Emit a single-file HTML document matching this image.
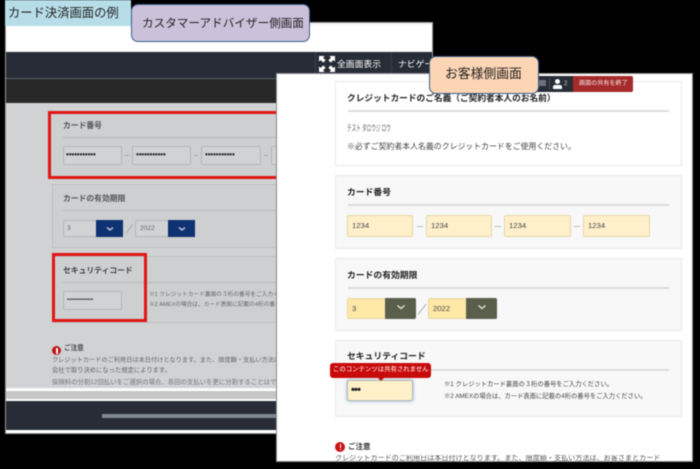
<!DOCTYPE html>
<html lang="ja"><head><meta charset="utf-8"><style>
html,body{margin:0;padding:0;background:#000}
body{width:700px;height:469px;overflow:hidden;position:relative}
#s{position:absolute;left:0;top:0;width:700px;height:469px;overflow:hidden;font-family:"Liberation Sans","Noto Sans CJK JP",sans-serif;filter:blur(.45px)}
#s div{position:absolute;box-sizing:border-box}
.t{white-space:nowrap;line-height:1}
.i{border:1px solid #b4b6b8;border-radius:2px;background:#d0d2d4;color:#333}
.y{border:1px solid #e6d6a8;border-radius:2px;background:#fff0ca;color:#444;font-size:7.7px;padding-left:4px;line-height:20px}
.p{background:#f8f8f8;border:1px solid #e8e8e8}
.h{font-weight:bold;color:#222;font-size:8.8px}
.d{background:#aaa;height:1px;width:4px}
</style></head><body><div id="s">
<!-- back window -->
<div style="left:5px;top:22px;width:428px;height:412px;background:#f4f4f4;border:1px solid #999"></div>
<div style="left:6px;top:25px;width:426px;height:26px;background:#fff"></div>
<div style="left:6px;top:52px;width:426px;height:26px;background:#272c36"></div>
<div style="left:6px;top:78px;width:426px;height:1px;background:#5a606a"></div>
<div style="left:6px;top:79px;width:426px;height:24px;background:#282828"></div>
<div style="left:6px;top:103px;width:272px;height:285px;background:#d0d2d4"></div>
<div style="left:315px;top:52px;width:1px;height:26px;background:#3c424c"></div>
<div style="left:391px;top:52px;width:1px;height:26px;background:#3c424c"></div>
<svg style="position:absolute;left:319px;top:56px" width="16" height="16" viewBox="0 0 17 17"><path fill="#fff" d="M0 0h6L4.300 1.800 7 4.500 4.500 7 1.800 4.300 0 6zM17 0v6l-1.800-1.700L12.500 7 10 4.500l2.700-2.700L11 0zM0 17v-6l1.800 1.700L4.500 10 7 12.500l-2.700 2.700L6 17zM17 17h-6l1.700-1.800L10 12.500l2.500-2.500 2.700 2.700L17 11z"/></svg>
<div class="t" style="left:337px;top:59.500px;font-size:8.800px;color:#fff">全画面表示</div>
<div class="t" style="left:398px;top:59.500px;font-size:8.800px;color:#fff">ナビゲーション</div>

<!-- back panel 1 -->
<div style="left:50px;top:113px;width:230px;height:65px;background:#cdcfd1"></div>
<div class="t h" style="left:63px;top:121.500px;color:#555;font-size:7.800px">カード番号</div>
<div style="left:63px;top:137px;width:215px;height:1px;background:#b5b7b9"></div>
<div class="i" style="left:63px;top:146px;width:59px;height:19px"></div>
<div class="i" style="left:132px;top:146px;width:59px;height:19px"></div>
<div class="i" style="left:201px;top:146px;width:60px;height:19px"></div>
<div class="i" style="left:271px;top:146px;width:20px;height:19px"></div>
<div class="t" style="left:66px;top:151px;font-size:8px;letter-spacing:-.1px;color:#222;font-weight:bold">•••••••••••</div>
<div class="t" style="left:136px;top:151px;font-size:8px;letter-spacing:-.1px;color:#222;font-weight:bold">•••••••••••</div>
<div class="t" style="left:205px;top:151px;font-size:8px;letter-spacing:-.1px;color:#222;font-weight:bold">•••••••••••</div>
<div class="d" style="left:125px;top:155px"></div><div class="d" style="left:194px;top:155px"></div><div class="d" style="left:264px;top:155px"></div>
<div style="left:48px;top:111px;width:232px;height:68px;border:3px solid #e01515;border-right:none"></div>

<!-- back panel 2 -->
<div style="left:52px;top:184px;width:230px;height:64px;background:#cdcfd1;border:1px solid #bcbec0"></div>
<div class="t h" style="left:63px;top:195px;color:#555;font-size:7.800px">カードの有効期限</div>
<div style="left:63px;top:210px;width:215px;height:1px;background:#b5b7b9"></div>
<div class="i" style="left:63px;top:220px;width:60px;height:17px;font-size:6.600px;padding-left:3px;line-height:15px;color:#666">3</div>
<div style="left:96px;top:220px;width:27px;height:17px;background:#0f3272"></div>
<svg style="position:absolute;left:106px;top:226px" width="8" height="6"><path d="M1 1.500l3 2.500 3-2.500" fill="none" stroke="#cfd6e6" stroke-width="1.300"/></svg>
<svg style="position:absolute;left:125px;top:222px" width="9" height="13"><path d="M1 11.500L8 2" stroke="#aaa" fill="none"/></svg>
<div class="i" style="left:135px;top:220px;width:60px;height:17px;font-size:6.600px;padding-left:4px;line-height:15px;color:#666">2022</div>
<div style="left:168px;top:220px;width:27px;height:17px;background:#0f3272"></div>
<svg style="position:absolute;left:178px;top:226px" width="8" height="6"><path d="M1 1.500l3 2.500 3-2.500" fill="none" stroke="#cfd6e6" stroke-width="1.300"/></svg>

<!-- back panel 3 -->
<div style="left:52px;top:256px;width:230px;height:67px;background:#cdcfd1;border:1px solid #bcbec0"></div>
<div class="t h" style="left:63px;top:267px;color:#444;font-size:7.800px">セキュリティコード</div>
<div style="left:63px;top:282px;width:215px;height:1px;background:#b5b7b9"></div>
<div class="i" style="left:63px;top:291px;width:59px;height:19px"></div>
<div class="t" style="left:67px;top:298px;font-size:5px;color:#333;font-weight:bold">•••••••••••••••</div>
<div class="t" style="left:149px;top:293px;font-size:5.700px;color:#666">※1 クレジットカード裏面の３桁の番号をご入力ください。</div>
<div class="t" style="left:149px;top:303px;font-size:5.700px;color:#666">※2 AMEXの場合は、カード表面に記載の4桁の番号をご入力ください。</div>
<div style="left:52px;top:253px;width:95px;height:69px;border:3px solid #e01515"></div>

<div style="left:52px;top:346px;width:9px;height:9px;border-radius:50%;background:#c01616"></div>
<div style="left:56px;top:348px;width:1.500px;height:3.500px;background:#fff"></div>
<div style="left:56px;top:352px;width:1.500px;height:1.500px;background:#fff"></div>
<div class="t" style="left:64px;top:346px;font-size:6.600px;color:#444;font-weight:bold">ご注意</div>
<div class="t" style="left:52px;top:358px;font-size:6.200px;color:#666">クレジットカードのご利用日は本日付けとなります。また、限度額・支払い方法は、お客さまとカード</div>
<div class="t" style="left:52px;top:368px;font-size:6.300px;color:#666">会社で取り決めになった規定によります。</div>
<div class="t" style="left:52px;top:380px;font-size:6.400px;color:#777">保険料の分割12回払いをご選択の場合、各回の支払いを更に分割することはできません。</div>

<div style="left:6px;top:389px;width:272px;height:1.500px;background:#fff"></div>
<div style="left:6px;top:391px;width:272px;height:8px;background:#c6c6c6"></div>
<div style="left:6px;top:399px;width:272px;height:1.500px;background:#fff"></div>
<div style="left:6px;top:401px;width:272px;height:29px;background:#272c36"></div>
<div style="left:102px;top:414px;width:176px;height:4px;background:#7f8791"></div>
<div style="left:6px;top:430px;width:272px;height:3px;background:#fff"></div>

<!-- front window -->
<div style="left:276px;top:73px;width:417px;height:389px;background:#fff;border:1px solid #8a8a8a"></div>

<div style="left:335px;top:81px;width:347px;height:85px;background:#fff;border:1px solid #e8e8e8"></div>
<div class="t h" style="left:347px;top:93.500px;font-size:8.700px">クレジットカードのご名義（ご契約者本人のお名前）</div>
<div style="left:348px;top:110px;width:321px;height:1.500px;background:#ddd"></div>
<div class="t" style="left:347px;top:124px;font-size:8.500px;color:#555;transform:scaleX(.54);transform-origin:left">テスト タロウジ ロウ</div>
<div class="t" style="left:347px;top:142.500px;font-size:7.900px;color:#444">※必ずご契約者本人名義のクレジットカードをご使用ください。</div>

<div class="p" style="left:335px;top:175px;width:347px;height:74px"></div>
<div class="t h" style="left:347px;top:187.500px">カード番号</div>
<div style="left:348px;top:204px;width:321px;height:1.500px;background:#ddd"></div>
<div class="y" style="left:347px;top:215px;width:66px;height:22px">1234</div>
<div class="y" style="left:426px;top:215px;width:66px;height:22px">1234</div>
<div class="y" style="left:504px;top:215px;width:67px;height:22px">1234</div>
<div class="y" style="left:583px;top:215px;width:67px;height:22px">1234</div>
<div class="d" style="left:417px;top:226px;width:6px;background:#bbb"></div>
<div class="d" style="left:495px;top:226px;width:6px;background:#bbb"></div>
<div class="d" style="left:574px;top:226px;width:6px;background:#bbb"></div>

<div class="p" style="left:335px;top:258px;width:347px;height:73px"></div>
<div class="t h" style="left:347px;top:270.500px">カードの有効期限</div>
<div style="left:348px;top:287px;width:321px;height:1.500px;background:#ddd"></div>
<div class="y" style="left:347px;top:298px;width:69px;height:21px;background:#ffe8a6;line-height:19px">3</div>
<div style="left:385px;top:298px;width:31px;height:21px;background:#595f4b;border-radius:0 2px 2px 0"></div>
<svg style="position:absolute;left:396px;top:304px" width="10" height="7"><path d="M1.500 1.500l3.500 3 3.500-3" fill="none" stroke="#e4e4d8" stroke-width="1.400"/></svg>
<svg style="position:absolute;left:417px;top:302px" width="10" height="14"><path d="M1 12.500L9 2" stroke="#aaa" fill="none"/></svg>
<div class="y" style="left:428px;top:298px;width:69px;height:21px;background:#ffe8a6;line-height:19px">2022</div>
<div style="left:466px;top:298px;width:31px;height:21px;background:#595f4b;border-radius:0 2px 2px 0"></div>
<svg style="position:absolute;left:477px;top:304px" width="10" height="7"><path d="M1.500 1.500l3.500 3 3.500-3" fill="none" stroke="#e4e4d8" stroke-width="1.400"/></svg>

<div class="p" style="left:335px;top:340px;width:347px;height:77px"></div>
<div class="t h" style="left:347px;top:351.500px">セキュリティコード</div>
<div style="left:348px;top:369px;width:321px;height:1.500px;background:#ddd"></div>
<div style="left:347px;top:380px;width:66px;height:21px;background:#fff0ca;border:1px solid #b4bcae;border-radius:2px;box-shadow:0 0 3px #7da4d8"></div>
<div class="t" style="left:351px;top:385px;font-size:11px;letter-spacing:-.8px;font-weight:bold;color:#222">•••</div>
<div style="left:330px;top:363px;width:101px;height:15px;background:#c80a0a;border-radius:3px"></div>
<div style="left:377px;top:377px;width:0;height:0;border:4px solid transparent;border-top-color:#c80a0a;border-bottom:0"></div>
<div class="t" style="left:333px;top:367px;font-size:6.400px;color:#fff">このコンテンツは共有されません</div>
<div class="t" style="left:444px;top:382px;font-size:6.300px;color:#444">※1 クレジットカード裏面の３桁の番号をご入力ください。</div>
<div class="t" style="left:444px;top:394px;font-size:6.300px;color:#444">※2 AMEXの場合は、カード表面に記載の4桁の番号をご入力ください。</div>

<div style="left:335px;top:442px;width:10px;height:10px;border-radius:50%;background:#c81414"></div>
<div style="left:339.500px;top:444px;width:1.500px;height:3.500px;background:#fff"></div>
<div style="left:339.500px;top:448.500px;width:1.500px;height:1.500px;background:#fff"></div>
<div class="t" style="left:348px;top:442.500px;font-size:7.500px;font-weight:bold;color:#333">ご注意</div>
<div style="left:277px;top:455px;width:415px;height:5.500px;overflow:hidden">
<div class="t" style="left:58px;top:0;font-size:7.100px;color:#555">クレジットカードのご利用日は本日付けとなります。また、限度額・支払い方法は、お客さまとカード</div>
</div>

<!-- front toolbar -->
<div style="left:525px;top:76px;width:108px;height:16px;background:#272c36;border-radius:3px"></div>
<div style="left:538px;top:80px;width:8px;height:6px;background:#6b717b"></div>
<div style="left:549px;top:78px;width:1px;height:12px;background:#4a505a"></div>
<div style="left:555px;top:79px;width:5px;height:5px;border-radius:50%;background:#fff"></div>
<div style="left:553px;top:84.500px;width:9px;height:4px;background:#fff;border-radius:2px 2px 0 0"></div>
<div class="t" style="left:564px;top:81px;font-size:6px;color:#ddd">2</div>
<div style="left:573px;top:76px;width:60px;height:16px;background:#a52a2a;border-radius:2px"></div>
<div class="t" style="left:579px;top:81px;font-size:6.100px;color:#f6e6e6">画面の共有を終了</div>

<!-- labels -->
<div style="left:5px;top:0;width:126px;height:26px;background:#b7dde8"></div>
<div class="t" style="left:8px;top:7px;font-size:12.300px;color:#222">カード決済画面の例</div>
<div style="left:131px;top:4px;width:179px;height:38px;background:#ccc1da;border:1px solid #385d8a;border-radius:7px"></div>
<div class="t" style="left:142px;top:18px;font-size:11.600px;color:#222">カスタマーアドバイザー側画面</div>
<div style="left:429px;top:56px;width:110px;height:38px;background:#fcd5b5;border:1px solid #385d8a;border-radius:7px"></div>
<div class="t" style="left:445px;top:68px;font-size:12.800px;color:#222">お客様側画面</div>
</div></body></html>
